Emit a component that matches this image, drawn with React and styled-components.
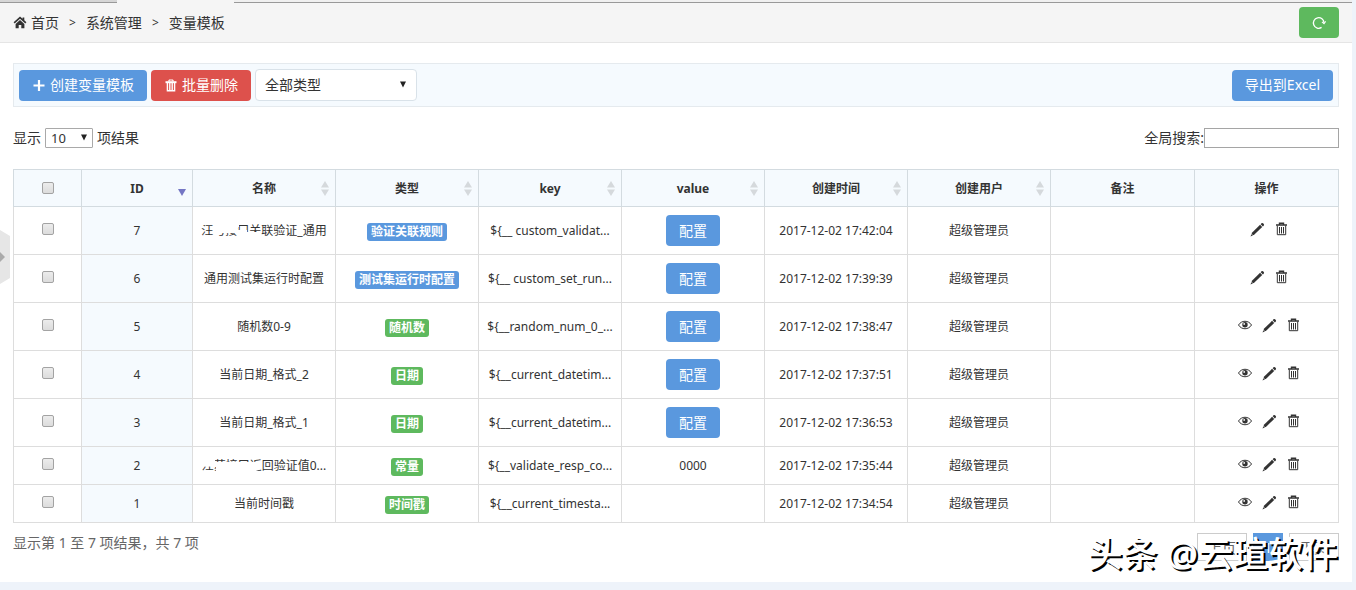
import React from "react";
import styled, { createGlobalStyle } from "styled-components";

const GlobalStyle = createGlobalStyle`
  * { box-sizing: border-box; }
  body {
    margin: 0;
    background: #eef3fa;
    color: #333;
    font: 14px/20px "Noto Sans", "Noto Sans CJK SC", sans-serif;
  }
  button, input, select { font-family: inherit; color: inherit; }
`;

const Page = styled.div`
  position: relative;
  margin: 0 4px 8px 0;
  background: #fff;
`;

const TabStrip = styled.div`
  display: flex;
  height: 3px;
  background: #f5f5f5;
`;

const TabEdge = styled.div`
  flex: ${(p) => (p.$grow ? "1" : "none")};
  width: ${(p) => p.$width || "auto"};
  background: ${(p) => p.$fill || "#f0f0f0"};
  border-bottom: ${(p) => (p.$line ? "1px solid #999" : "0")};
`;

const Breadcrumb = styled.nav`
  display: flex;
  align-items: center;
  justify-content: space-between;
  height: 40px;
  padding: 0 13px;
  background: #f5f5f5;
  border-bottom: 1px solid #e5e5e5;
`;

const Crumbs = styled.div`
  display: flex;
  align-items: center;
  gap: 10px;
`;

const Crumb = styled.a`
  display: flex;
  align-items: center;
  gap: 4px;
  color: #333;
  text-decoration: none;
`;

const Separator = styled.span`
  font-size: 12px;
`;

const tones = {
  blue: "#5a98de",
  red: "#dd514c",
  green: "#5eb95e",
};

const Button = styled.button`
  display: inline-flex;
  align-items: center;
  justify-content: center;
  gap: 4px;
  height: 31px;
  padding: 0 ${(p) => (p.$iconOnly ? "12px" : "13px")};
  border: 0;
  border-radius: 4px;
  background: ${(p) => tones[p.$tone]};
  color: #fff;
  font-size: 14px;
  line-height: 20px;
`;

const Content = styled.main`
  padding: 20px 13px 22px;
`;

const Toolbar = styled.div`
  display: flex;
  align-items: center;
  gap: 4px;
  height: 44px;
  padding: 0 5px;
  background: #f5fafe;
  border: 1px solid #e5eaee;
`;

const Push = styled.div`
  margin-left: auto;
`;

const SelectBox = styled.span`
  position: relative;
  display: inline-flex;
  margin: ${(p) => (p.$small ? "0 4px" : "0")};
  svg {
    position: absolute;
    right: ${(p) => (p.$small ? "5px" : "10px")};
    top: 50%;
    margin-top: -4px;
    pointer-events: none;
  }
`;

const Select = styled.select`
  appearance: none;
  width: ${(p) => (p.$small ? "48px" : "162px")};
  height: ${(p) => (p.$small ? "20px" : "32px")};
  padding: 0 ${(p) => (p.$small ? "5px" : "9px")};
  border: 1px solid ${(p) => (p.$small ? "#a9a9a9" : "#d9e2e9")};
  border-radius: ${(p) => (p.$small ? "1px" : "4px")};
  background: #fff;
  font-size: ${(p) => (p.$small ? "13px" : "14px")};
  line-height: 18px;
`;

const Controls = styled.div`
  display: flex;
  align-items: center;
  justify-content: space-between;
  height: 62px;
`;

const Field = styled.label`
  display: flex;
  align-items: center;
`;

const SearchInput = styled.input`
  width: 135px;
  height: 20px;
  border: 1px solid #a5a5a5;
  background: #fff;
`;

const Table = styled.table`
  width: 100%;
  table-layout: fixed;
  border-collapse: collapse;
  font-size: 12px;
  line-height: 18px;
  text-align: center;
`;

const Col = styled.col`
  width: ${(p) => p.$width || "auto"};
`;

const Head = styled.th`
  position: relative;
  height: 37px;
  padding: 2px 8px 0;
  border: 1px solid #d3dbe0;
  background: #f5fafe;
  font-weight: 700;
`;

const SortMark = styled.svg`
  position: absolute;
  right: 5px;
  top: 11px;
`;

const Cell = styled.td`
  padding: 0 8px;
  border: 1px solid #ddd;
  background: ${(p) => (p.$sorted ? "#f5fafe" : "#fff")};
`;

const Row = styled.tr`
  height: ${(p) => (p.$compact ? "38px" : "48px")};
`;

const Ellipsis = styled.div`
  position: relative;
  overflow: hidden;
  white-space: nowrap;
`;

const Redaction = styled.svg`
  position: absolute;
  left: 0;
  top: 0;
`;

const Check = styled.input`
  appearance: none;
  display: block;
  width: 12px;
  height: 12px;
  margin: 0 auto 3px;
  border: 1px solid #a3a3a3;
  border-radius: 2px;
  background: linear-gradient(#ececec, #dcdcdc);
`;

const Tag = styled.span`
  display: inline-block;
  height: 18px;
  margin-top: 3px;
  padding: 0 4px;
  border-radius: 3px;
  background: ${(p) => tones[p.$tone]};
  color: #fff;
  font-weight: 700;
  line-height: 18px;
  vertical-align: middle;
`;

const Actions = styled.div`
  display: flex;
  justify-content: center;
  gap: 10px;
  padding: 0 0 2px 4px;
`;

const IconButton = styled.button`
  display: flex;
  padding: 0;
  border: 0;
  background: none;
  color: #333;
`;

const Footer = styled.footer`
  display: flex;
  justify-content: space-between;
  align-items: flex-start;
  height: 37px;
  padding-top: 10px;
  color: #666;
`;

const Pager = styled.div`
  display: flex;
  gap: 6px;
`;

const PageButton = styled.button`
  height: 28px;
  padding: 0 10px;
  border: 1px solid ${(p) => (p.$current ? "#5a98de" : "#ccc")};
  background: ${(p) => (p.$current ? "#5a98de" : "#fff")};
  color: ${(p) => (p.$current ? "#fff" : "#666")};
  font-size: 14px;
`;

const Watermark = styled.div`
  position: absolute;
  right: 14px;
  bottom: 5px;
  color: #fff;
  font-size: 35px;
  font-weight: 500;
  line-height: 46px;
  white-space: nowrap;
  text-shadow: 2px 2px 0 #000;
`;

const Handle = styled.button`
  position: absolute;
  left: 0;
  top: 230px;
  padding: 0;
  border: 0;
  background: none;
  display: flex;
`;

const HomeIcon = () => (
  <svg width="14" height="13" viewBox="0 0 14 13" fill="#333" aria-hidden="true">
    <path d="M7 .4.6 6.2l1.1 1.3L7 2.8l5.3 4.7 1.1-1.3-2.1-1.9V1.4H9.6v1.4z" />
    <path d="M7 4.1 2.6 8v4.3h3.1V9h2.6v3.3h3.1V8z" />
  </svg>
);

const RefreshIcon = () => (
  <svg width="16" height="16" viewBox="0 0 16 16" fill="none" stroke="#fff" strokeWidth="1.3" aria-hidden="true">
    <path d="M10.6 12.4A5.3 5.3 0 1 1 13 7.8" />
    <path d="m11 6.8 2 1.8 1.6-2.2" strokeWidth="1.1" />
  </svg>
);

const PlusIcon = () => (
  <svg width="14" height="14" viewBox="0 0 14 14" stroke="#fff" strokeWidth="2.2" aria-hidden="true">
    <path d="M7 2v11M1.5 7.5h11" />
  </svg>
);

const TrashSolidIcon = () => (
  <svg width="14" height="13" viewBox="0 0 14 13" fill="none" stroke="#fff" aria-hidden="true">
    <path d="M1.5 3.2h11" strokeWidth="2" />
    <path d="M4.6 2.4 5.4 1h3.2l.8 1.4" strokeWidth="1.2" />
    <path d="M3.4 4v7.8h7.2V4M5.8 4v8M8.2 4v8" strokeWidth="1.4" />
  </svg>
);

const Caret = () => (
  <svg width="8" height="7" viewBox="0 0 8 7" aria-hidden="true">
    <path d="M1 .5h6L4 6.5z" fill="#222" />
  </svg>
);

const EyeIcon = () => (
  <svg width="14" height="14" viewBox="0 0 14 14" aria-hidden="true">
    <path d="M.5 7C3.5 2 10.5 2 13.5 7 10.5 12 3.5 12 .5 7Z" fill="none" stroke="#333" />
    <circle cx="7" cy="6.8" r="2.7" fill="#333" />
    <circle cx="6.2" cy="5.9" r=".9" fill="#fff" />
  </svg>
);

const PencilIcon = () => (
  <svg width="15" height="15" viewBox="0 0 15 15" fill="#333" aria-hidden="true">
    <path d="m2.2 10.4 7.9-7.6 2.1 2.1-7.8 7.7-3.9 1.8z" />
    <path d="m10.7 2.2.8-.9c1.1-1.1 3.4 1 2.3 2.2l-.9.9z" />
    <path d="m1.8 12.3.9.9" stroke="#fff" strokeWidth=".8" />
  </svg>
);

const TrashIcon = () => (
  <svg width="13" height="14" viewBox="0 0 13 14" fill="none" stroke="#333" aria-hidden="true">
    <path d="M1 3h11M4.5 2.5V1.2h4v1.3" strokeWidth="1.4" />
    <path d="M2.3 3.5v9.2h8.4V3.5M4.5 5v6.5M6.5 5v6.5M8.5 5v6.5" />
  </svg>
);

const columns = [
  { label: "ID", sort: "desc" },
  { label: "名称", sort: "none" },
  { label: "类型", sort: "none" },
  { label: "key", sort: "none" },
  { label: "value", sort: "none" },
  { label: "创建时间", sort: "none" },
  { label: "创建用户", sort: "none" },
  { label: "备注" },
  { label: "操作" },
];

const rows = [
  { id: 7, name: "汪与接口关联验证_通用", mask: "M13 0H38V5H13Z M12 4H36V11H12Z M36 8H46V18H36Z M46 10H60V18H46Z M12 15H62V18H12Z M0 0H7V3H0Z", type: "验证关联规则", tone: "blue", key: "${__ custom_validat...", time: "17:42:04" },
  { id: 6, name: "通用测试集运行时配置", type: "测试集运行时配置", tone: "blue", key: "${__ custom_set_run...", time: "17:39:39" },
  { id: 5, name: "随机数0-9", type: "随机数", tone: "green", key: "${__random_num_0_...", time: "17:38:47", view: true },
  { id: 4, name: "当前日期_格式_2", type: "日期", tone: "green", key: "${__current_datetim...", time: "17:37:51", view: true },
  { id: 3, name: "当前日期_格式_1", type: "日期", tone: "green", key: "${__current_datetim...", time: "17:36:53", view: true },
  { id: 2, name: "汪苏接口返回验证值0...", mask: "M0 0H14V5H60V12L52 15V18H15V10L0 9Z", type: "常量", tone: "green", key: "${__validate_resp_co...", value: "0000", time: "17:35:44", view: true },
  { id: 1, name: "当前时间戳", type: "时间戳", tone: "green", key: "${__current_timesta...", value: "", time: "17:34:54", view: true },
];

function SortIcon({ sort }) {
  return (
    <SortMark width="10" height="16" viewBox="0 0 10 16" aria-hidden="true">
      {sort === "desc" ? (
        <path d="M1 8h8L5 15z" fill="#7476c4" />
      ) : (
        <path d="M1 6.5h8L5 0zM1 8.5h8L5 15z" fill="#d5d9dc" />
      )}
    </SortMark>
  );
}

function DataRow({ row }) {
  const configurable = row.value === undefined;
  return (
    <Row $compact={!configurable}>
      <Cell><Check type="checkbox" aria-label={`选择 ${row.id}`} /></Cell>
      <Cell $sorted>{row.id}</Cell>
      <Cell>
        <Ellipsis>
          {row.name}
          {row.mask && (
            <Redaction width="64" height="18" viewBox="0 0 64 18" aria-hidden="true">
              <path d={row.mask} fill="#fff" />
            </Redaction>
          )}
        </Ellipsis>
      </Cell>
      <Cell><Tag $tone={row.tone}>{row.type}</Tag></Cell>
      <Cell><Ellipsis>{row.key}</Ellipsis></Cell>
      <Cell>{configurable ? <Button $tone="blue">配置</Button> : row.value}</Cell>
      <Cell>2017-12-02 {row.time}</Cell>
      <Cell>超级管理员</Cell>
      <Cell />
      <Cell>
        <Actions>
          {row.view && <IconButton aria-label="查看"><EyeIcon /></IconButton>}
          <IconButton aria-label="编辑"><PencilIcon /></IconButton>
          <IconButton aria-label="删除"><TrashIcon /></IconButton>
        </Actions>
      </Cell>
    </Row>
  );
}

export default function App() {
  return (
    <>
      <GlobalStyle />
      <Page>
        <TabStrip>
          <TabEdge $width="117px" $fill="#d6d6d6" $line />
          <TabEdge $width="117px" $fill="#f5f5f5" />
          <TabEdge $grow $line />
        </TabStrip>
        <Breadcrumb>
          <Crumbs>
            <Crumb href="#"><HomeIcon />首页</Crumb>
            <Separator>&gt;</Separator>
            <Crumb href="#">系统管理</Crumb>
            <Separator>&gt;</Separator>
            <Crumb href="#">变量模板</Crumb>
          </Crumbs>
          <Button $tone="green" $iconOnly aria-label="刷新"><RefreshIcon /></Button>
        </Breadcrumb>
        <Content>
          <Toolbar>
            <Button $tone="blue"><PlusIcon />创建变量模板</Button>
            <Button $tone="red"><TrashSolidIcon />批量删除</Button>
            <SelectBox>
              <Select aria-label="类型"><option>全部类型</option></Select>
              <Caret />
            </SelectBox>
            <Push><Button $tone="blue">导出到Excel</Button></Push>
          </Toolbar>
          <Controls>
            <Field>
              显示
              <SelectBox $small>
                <Select $small><option>10</option></Select>
                <Caret />
              </SelectBox>
              项结果
            </Field>
            <Field>全局搜索:<SearchInput type="text" /></Field>
          </Controls>
          <Table>
            <colgroup>
              <Col $width="68px" />
              <Col $width="111px" />
              <Col $width="143px" span={6} />
              <Col span={2} />
            </colgroup>
            <thead>
              <tr>
                <Head><Check type="checkbox" aria-label="全选" /></Head>
                {columns.map((c) => (
                  <Head key={c.label}>
                    {c.label}
                    {c.sort && <SortIcon sort={c.sort} />}
                  </Head>
                ))}
              </tr>
            </thead>
            <tbody>
              {rows.map((row) => <DataRow key={row.id} row={row} />)}
            </tbody>
          </Table>
          <Footer>
            <span>显示第 1 至 7 项结果，共 7 项</span>
            <Pager>
              <PageButton>上页</PageButton>
              <PageButton $current>1</PageButton>
              <PageButton>下页</PageButton>
            </Pager>
          </Footer>
        </Content>
        <Handle aria-label="展开菜单">
          <svg width="10" height="54" viewBox="0 0 10 54" aria-hidden="true">
            <path d="M0 0 10 6V48L0 54Z" fill="#e6e6e6" />
            <path d="M0 22 5 27 0 32Z" fill="#aaa" />
          </svg>
        </Handle>
        <Watermark>头条 @云瑄软件</Watermark>
      </Page>
    </>
  );
}
